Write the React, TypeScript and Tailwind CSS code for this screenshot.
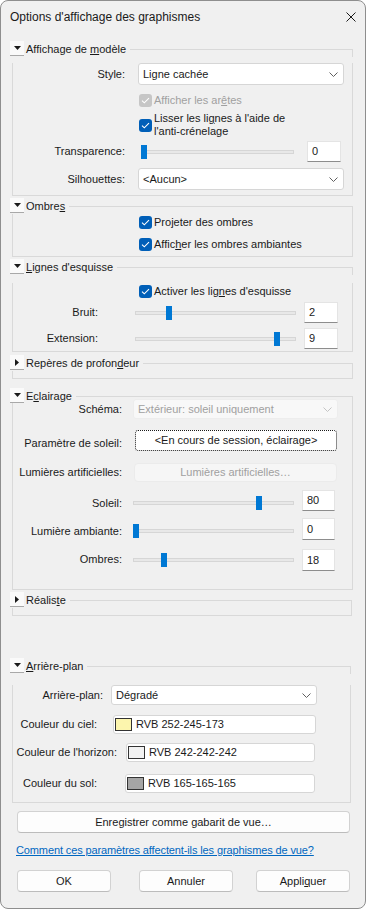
import type { ReactNode } from "react";

const LINE = "border-[#d9d9d9]";

function Legend({ label, open = true }: { label: ReactNode; open?: boolean }) {
    return (
        <div className="flex h-[16px] items-stretch">
            <div className="flex h-[15px] w-[14px] items-center justify-center border-b border-[#a8a8a8] bg-[#fafafa]">
                {open ? (
                    <svg width="7" height="4" viewBox="0 0 7 4">
                        <path d="M0 0H7L3.5 4Z" fill="#1a1a1a" />
                    </svg>
                ) : (
                    <svg width="4" height="7" viewBox="0 0 4 7">
                        <path d="M0 0L4 3.5L0 7Z" fill="#1a1a1a" />
                    </svg>
                )}
            </div>
            <span className="ml-[2px] pr-[4px] leading-[16px]">{label}</span>
            <div className={`mt-[8px] flex-1 border-t border-r ${LINE}`} />
        </div>
    );
}

function Check({ children, disabled }: { children: ReactNode; disabled?: boolean }) {
    return (
        <div className="flex items-center">
            <span
                className={`flex h-[13px] w-[13px] shrink-0 items-center justify-center rounded-[3px] ${disabled ? "bg-[#c6c6c6]" : "bg-[#005fb8]"}`}
            >
                <svg width="9" height="7" viewBox="0 0 9 7">
                    <path d="M1 3.6L3.3 5.8L8 1.2" fill="none" stroke="#fff" strokeWidth="1.1" />
                </svg>
            </span>
            <span className={`ml-[2px] leading-[13px] ${disabled ? "text-[#a0a0a0]" : ""}`}>{children}</span>
        </div>
    );
}

function Slider({ w, at, className = "" }: { w: string; at: number; className?: string }) {
    return (
        <div className={`relative h-[14px] ${w} ${className}`}>
            <div className="mt-[5px] h-[4px] border border-[#d6d6d6] bg-[#e8e8e8]" />
            {/* thumb */}
            <div className="absolute top-0 h-[14px] w-[6px] bg-[#0078d4]" style={{ left: at }} />
        </div>
    );
}

function Num({ v, className = "" }: { v: string; className?: string }) {
    return (
        <div
            className={`flex items-center border border-[#e4e4e4] border-b-[#8d8d8d] bg-white pl-[4px] ${className}`}
        >
            {v}
        </div>
    );
}

function Select({ value, className = "", disabled }: { value: string; className?: string; disabled?: boolean }) {
    return (
        <div
            className={`flex items-center justify-between rounded-[3px] border pl-[4px] pr-[5px] ${disabled ? "border-[#ededed] bg-[#f8f8f8] text-[#a0a0a0]" : "border-[#d6d6d6] bg-white"} ${className}`}
        >
            <span>{value}</span>
            <svg width="9" height="5" viewBox="0 0 9 5">
                <path d="M0.5 0.5L4.5 4.5L8.5 0.5" fill="none" stroke={disabled ? "#c4c4c4" : "#606060"} />
            </svg>
        </div>
    );
}

function ColorField({ swatch, text, className = "" }: { swatch: string; text: string; className?: string }) {
    return (
        <div className={`flex items-center rounded-[3px] border border-[#d6d6d6] bg-white pl-[1px] ${className}`}>
            <span className={`h-[13px] w-[17px] border border-[#333] ${swatch}`} />
            <span className="ml-[4px]">{text}</span>
        </div>
    );
}

function Btn({ children, className = "" }: { children: ReactNode; className?: string }) {
    return (
        <div
            className={`flex h-[22px] items-center justify-center rounded-[4px] border border-[#d2d2d2] border-b-[#bcbcbc] bg-[#fdfdfd] ${className}`}
        >
            {children}
        </div>
    );
}

export default function App() {
    return (
        <div className="h-[910px] w-[367px] bg-white">
            <div className="flex h-[909px] w-[366px] flex-col overflow-hidden rounded-[8px] border border-[#8e8e8e] bg-[#f0f0f0] font-['Liberation_Sans',Arial,sans-serif] text-[11px] text-[#1a1a1a]">
                {/* Title bar */}
                <div className="flex h-[31px] shrink-0 items-center justify-between px-[9px] text-[12px]">
                    <span>Options d'affichage des graphismes</span>
                    <svg width="10" height="10" viewBox="0 0 10 10">
                        <path d="M0.5 0.5L9.5 9.5M9.5 0.5L0.5 9.5" stroke="#1a1a1a" strokeWidth="1" />
                    </svg>
                </div>

                <div className="pl-[9px]">
                    {/* Affichage de modèle */}
                    <section className="mt-[9px] w-[343px]">
                        <Legend
                            label={
                                <>
                                    Affichage de <span className="underline">m</span>odèle
                                </>
                            }
                        />
                        <div className={`ml-[2px] border-x border-b pb-[5px] ${LINE}`}>
                            <div className="mt-[6px] flex h-[22px] items-center">
                                <span className="w-[112px] text-right">Style:</span>
                                <Select value="Ligne cachée" className="ml-[13px] h-[22px] w-[206px]" />
                            </div>
                            <div className="mt-[7px] flex h-[16px] items-center pl-[126px]">
                                <Check disabled>
                                    Afficher les ar<span className="underline">ê</span>tes
                                </Check>
                            </div>
                            <div className="mt-[4px] flex items-center pl-[126px]">
                                <Check>
                                    Lisser les li<span className="underline">g</span>nes à l'aide de
                                    <br />
                                    l'anti-crénelage
                                </Check>
                            </div>
                            <div className="mt-[3px] flex h-[21px] items-center">
                                <span className="w-[112px] text-right">Transparence:</span>
                                <Slider w="w-[153px]" at={0} className="ml-[16px]" />
                                <Num v="0" className="ml-[13px] h-[21px] w-[34px]" />
                            </div>
                            <div className="mt-[6px] flex h-[22px] items-center">
                                <span className="w-[112px] text-right">Silhouettes:</span>
                                <Select value="<Aucun>" className="ml-[13px] h-[22px] w-[206px]" />
                            </div>
                        </div>
                    </section>

                    {/* Ombres */}
                    <section className="mt-[2px] w-[343px]">
                        <Legend
                            label={
                                <>
                                    Ombre<span className="underline">s</span>
                                </>
                            }
                        />
                        <div className={`ml-[2px] border-x border-b pb-[4px] pl-[126px] ${LINE}`}>
                            <div className="flex h-[16px] items-center">
                                <Check>
                                    Pro<span className="underline">j</span>eter des ombres
                                </Check>
                            </div>
                            <div className="mt-[6px] flex h-[16px] items-center">
                                <Check>
                                    Affic<span className="underline">h</span>er les ombres ambiantes
                                </Check>
                            </div>
                        </div>
                    </section>

                    {/* Lignes d'esquisse */}
                    <section className="mt-[2px] w-[343px]">
                        <Legend
                            label={
                                <>
                                    <span className="underline">L</span>ignes d'esquisse
                                </>
                            }
                        />
                        <div className={`ml-[2px] border-x border-b pb-[2px] ${LINE}`}>
                            <div className="mt-[8px] flex h-[16px] items-center pl-[126px]">
                                <Check>
                                    Activer les lig<span className="underline">n</span>es d'esquisse
                                </Check>
                            </div>
                            <div className="mt-[3px] flex h-[21px] items-center">
                                <span className="w-[85px] text-right">Bruit:</span>
                                <Slider w="w-[161px]" at={31} className="ml-[37px]" />
                                <Num v="2" className="ml-[8px] h-[21px] w-[34px]" />
                            </div>
                            <div className="mt-[5px] flex h-[21px] items-center">
                                <span className="w-[85px] text-right">Extension:</span>
                                <Slider w="w-[161px]" at={139} className="ml-[37px]" />
                                <Num v="9" className="ml-[8px] h-[21px] w-[34px]" />
                            </div>
                        </div>
                    </section>

                    {/* Repères de profondeur */}
                    <section className="mt-[3px] w-[343px]">
                        <Legend
                            open={false}
                            label={
                                <>
                                    Repères de profon<span className="underline">d</span>eur
                                </>
                            }
                        />
                        <div className={`ml-[2px] h-[8px] border-x border-b ${LINE}`} />
                    </section>

                    {/* Eclairage */}
                    <section className="mt-[9px] w-[343px]">
                        <Legend
                            label={
                                <>
                                    E<span className="underline">c</span>lairage
                                </>
                            }
                        />
                        <div className={`ml-[2px] border-x border-b pb-[18px] ${LINE}`}>
                            <div className="-mt-[5px] flex h-[20px] items-center">
                                <span className="w-[109px] text-right">Schéma:</span>
                                <Select
                                    disabled
                                    value="Extérieur: soleil uniquement"
                                    className="ml-[11px] h-[20px] w-[205px]"
                                />
                            </div>
                            <div className="mt-[11px] flex h-[21px] items-start">
                                <span className="w-[109px] pt-[7px] text-right leading-[13px]">Paramètre de soleil:</span>
                                <div className="ml-[13px] flex h-[21px] w-[202px] items-center justify-center rounded-[3px] border border-dotted border-[#1a1a1a] bg-white">
                                    &lt;En cours de session, éclairage&gt;
                                </div>
                            </div>
                            <div className="mt-[12px] flex h-[19px] items-center">
                                <span className="w-[109px] text-right">Lumières artificielles:</span>
                                <div className="ml-[12px] flex h-[19px] w-[203px] items-center justify-center rounded-[4px] border border-[#ebebeb] bg-[#f6f6f6] text-[#a0a0a0]">
                                    Lumières artificielles…
                                </div>
                            </div>
                            <div className="mt-[8px] flex h-[21px] items-start">
                                <span className="w-[109px] pt-[7px] text-right leading-[13px]">Soleil:</span>
                                <Slider w="w-[161px]" at={123} className="ml-[11px] mt-[6px]" />
                                <Num v="80" className="ml-[8px] h-[21px] w-[33px]" />
                            </div>
                            <div className="mt-[7px] flex h-[22px] items-start">
                                <span className="w-[109px] pt-[7px] text-right leading-[13px]">Lumière ambiante:</span>
                                <Slider w="w-[161px]" at={0} className="ml-[11px] mt-[6px]" />
                                <Num v="0" className="ml-[8px] h-[22px] w-[33px]" />
                            </div>
                            <div className="mt-[9px] flex h-[22px] items-start">
                                <span className="w-[109px] pt-[4px] text-right leading-[13px]">Ombres:</span>
                                <Slider w="w-[161px]" at={28} className="ml-[11px] mt-[4px]" />
                                <Num v="18" className="ml-[8px] h-[22px] w-[33px]" />
                            </div>
                        </div>
                    </section>

                    {/* Réaliste */}
                    <section className="mt-[2px] w-[342px]">
                        <Legend
                            open={false}
                            label={
                                <>
                                    Réalis<span className="underline">t</span>e
                                </>
                            }
                        />
                        <div className={`ml-[2px] h-[8px] border-x border-b ${LINE}`} />
                    </section>

                    {/* Arrière-plan */}
                    <section className="mt-[42px] w-[341px]">
                        <Legend
                            label={
                                <>
                                    <span className="underline">A</span>rrière-plan
                                </>
                            }
                        />
                        <div className={`ml-[2px] border-x border-b pb-[9px] ${LINE}`}>
                            <div className="mt-[11px] flex h-[20px] items-center">
                                <span className="w-[90px] text-right">Arrière-plan:</span>
                                <Select value="Dégradé" className="ml-[8px] h-[20px] w-[206px]" />
                            </div>
                            <div className="mt-[10px] flex h-[19px] items-center">
                                <span className="w-[84px] text-right">Couleur du ciel:</span>
                                <ColorField
                                    swatch="bg-[#fcf5ad]"
                                    text="RVB 252-245-173"
                                    className="ml-[16px] h-[19px] w-[203px]"
                                />
                            </div>
                            <div className="mt-[9px] flex h-[19px] items-center">
                                <span className="w-[104px] text-right">Couleur de l'horizon:</span>
                                <ColorField
                                    swatch="bg-[#f2f2f2]"
                                    text="RVB 242-242-242"
                                    className="ml-[9px] h-[19px] w-[189px]"
                                />
                            </div>
                            <div className="mt-[12px] flex h-[19px] items-center">
                                <span className="w-[84px] text-right">Couleur du sol:</span>
                                <ColorField
                                    swatch="bg-[#a5a5a5]"
                                    text="RVB 165-165-165"
                                    className="ml-[28px] h-[19px] w-[190px]"
                                />
                            </div>
                        </div>
                    </section>

                    <Btn className="ml-[7px] mt-[8px] w-[333px]">Enregistrer comme gabarit de vue…</Btn>

                    <div className="ml-[6px] mt-[9px] leading-[16px] tracking-[-0.12px] text-[#0067c0] underline">
                        Comment ces paramètres affectent-ils les graphismes de vue?
                    </div>

                    <div className="mt-[12px] flex">
                        <Btn className="ml-[7px] w-[94px] border-[#0067c0] border-b-[#0067c0]">OK</Btn>
                        <Btn className="ml-[28px] w-[94px]">Annuler</Btn>
                        <Btn className="ml-[23px] w-[94px]">
                            Appli<span className="underline">q</span>uer
                        </Btn>
                    </div>
                </div>
            </div>
        </div>
    );
}
